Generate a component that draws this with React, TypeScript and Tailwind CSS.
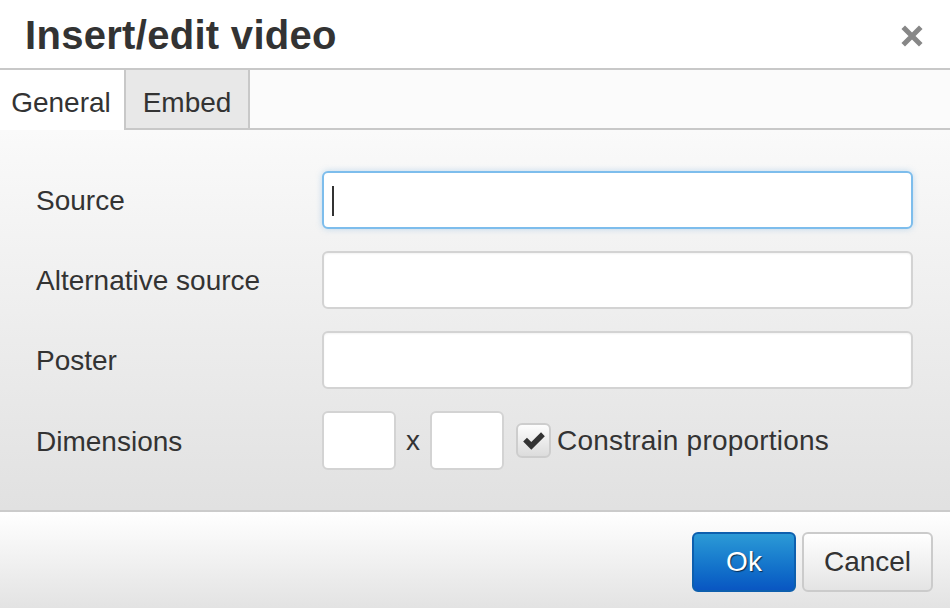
import React from 'react';

const font = { fontFamily: '"Liberation Sans", Arial, Helvetica, sans-serif' };

const ROWS = ['Source', 'Alternative source', 'Poster'];

function Field({ focused = false }: { focused?: boolean }) {
  return (
    <div
      className={
        'relative h-[58px] flex-1 rounded-[6px] border-2 bg-white ' +
        (focused
          ? 'border-[#7dbdec] shadow-[0_0_6px_rgba(90,160,220,0.35)]'
          : 'border-[#d3d3d3] shadow-[inset_0_1px_2px_rgba(0,0,0,0.05)]')
      }
    >
      {focused && <span className="absolute left-[8px] top-[13px] h-[30px] w-[2px] bg-[#333]" />}
    </div>
  );
}

export default function App() {
  return (
    <div className="flex h-[608px] w-[950px] flex-col bg-white text-[#333]" style={font}>
      {/* title bar */}
      <div className="flex h-[70px] shrink-0 items-center justify-between border-b-2 border-[#c8c8c8] bg-white pl-[25px] pr-[27px]">
        <h1 className="mt-[1px] text-[40px] font-bold leading-none tracking-[0.3px] text-[#333]">Insert/edit video</h1>
        <svg width="22" height="22" viewBox="0 0 22 22" className="mt-[4px]">
          <path d="M4 4 L18 18 M18 4 L4 18" stroke="#878787" strokeWidth="5" strokeLinecap="square" />
        </svg>
      </div>

      {/* tabs */}
      <div className="flex h-[60px] shrink-0 bg-[#fbfbfb]">
        <div className="flex w-[124px] items-center justify-center border-b-2 border-transparent bg-white pr-[2px] pt-[7px] text-[28px] leading-none">
          General
        </div>
        <div className="flex w-[126px] items-center justify-center border-x-2 border-b-2 border-[#c8c8c8] bg-[#e8e8e8] pt-[7px] text-[28px] leading-none">
          Embed
        </div>
        <div className="flex-1 border-b-2 border-[#c8c8c8]" />
      </div>

      {/* body */}
      <div className="flex h-[382px] shrink-0 flex-col gap-[22px] border-b-2 border-[#cbcbcb] bg-gradient-to-b from-[#fafafa] to-[#e1e1e1] pl-[36px] pr-[37px] pt-[41px]">
        {ROWS.map((label, i) => (
          <div key={label} className="flex items-center">
            <div className="w-[286px] shrink-0 pt-[2px] text-[28px] leading-none">{label}</div>
            <Field focused={i === 0} />
          </div>
        ))}
        <div className="flex items-center">
          <div className="w-[286px] shrink-0 pt-[2px] text-[28px] leading-none">Dimensions</div>
          <div className="h-[59px] w-[74px] rounded-[6px] border-2 border-[#d3d3d3] bg-white" />
          <span className="mx-[10px] text-[28px] leading-none">x</span>
          <div className="h-[59px] w-[74px] rounded-[6px] border-2 border-[#d3d3d3] bg-white" />
          <div className="ml-[12px] flex h-[35px] w-[35px] items-center justify-center rounded-[6px] border-2 border-[#cdcdcd] bg-gradient-to-b from-[#fdfdfd] to-[#dcdcdc]">
            <svg width="26" height="22" viewBox="0 0 24 20">
              <path d="M2 10.5 L5.5 7 L9.5 11 L18.5 2 L22 5.5 L9.5 18 Z" fill="#333" />
            </svg>
          </div>
          <span className="ml-[6px] tracking-[0.2px] text-[28px] leading-none">Constrain proportions</span>
        </div>
      </div>

      {/* footer */}
      <div className="flex flex-1 items-start justify-end gap-[6px] bg-gradient-to-b from-white to-[#e3e3e3] pr-[17px] pt-[20px]">
        <button className="h-[60px] w-[104px] rounded-[6px] border-2 border-[#0d5fae] bg-gradient-to-b from-[#2c9ad6] to-[#0a56c2] text-[28px] text-white [text-shadow:1px_1px_1px_rgba(0,0,0,0.6)]">
          Ok
        </button>
        <button className="h-[60px] w-[131px] rounded-[6px] border-2 border-[#cbcbcb] bg-gradient-to-b from-white to-[#e4e4e4] text-[28px] text-[#333]">
          Cancel
        </button>
      </div>
    </div>
  );
}
